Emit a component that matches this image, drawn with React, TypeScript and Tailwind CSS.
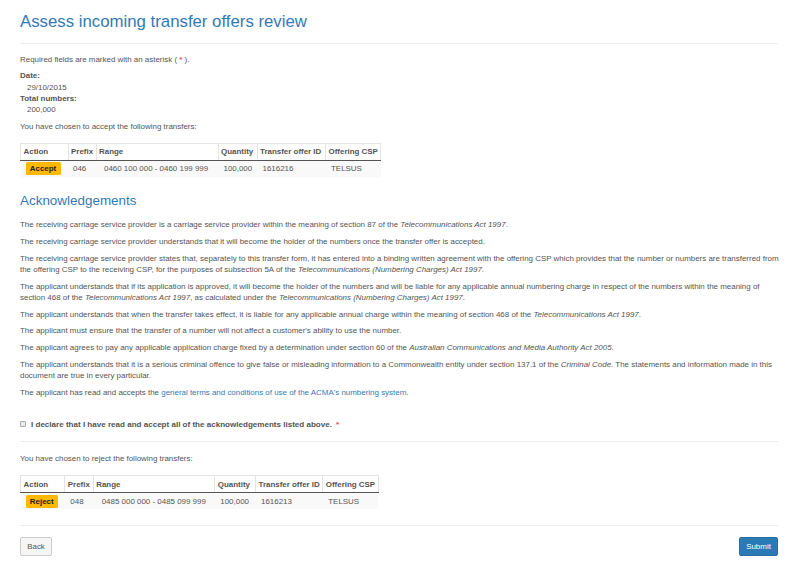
export default function App() {
  const P = "mb-[5.6px]";
  const th = "h-[17px] border border-[#e4e4e4] border-b-[#555] pl-[2.5px] text-left font-bold whitespace-nowrap";
  return (
    <div className="min-h-[567px] bg-white pl-5 pr-[22px] pt-[13px] text-[7.95px] leading-[11.2px] text-[#555555]" style={{ fontFamily: '"Liberation Sans", Arial, sans-serif' }}>
      <h1 className="text-[16.8px] leading-[18.5px] text-[#337ab7]">Assess incoming transfer offers review</h1>
      <div className="mt-[11px] mb-[10px] border-t border-[#eeeeee]" />
      <p className="mb-[5.6px]">Required fields are marked with an asterisk ( <span className="font-bold text-[#d9534f]">*</span> ).</p>
      <dl>
        <dt className="font-bold">Date:</dt>
        <dd className="pl-[7px]">29/10/2015</dd>
        <dt className="font-bold">Total numbers:</dt>
        <dd className="pl-[7px]">200,000</dd>
      </dl>
      <p className="mt-[5.6px] mb-[11px]">You have chosen to accept the following transfers:</p>
      <table className="w-[360px] table-fixed border-collapse">
        <colgroup><col className="w-[47.5px]" /><col className="w-[28px]" /><col className="w-[122px]" /><col className="w-[39px]" /><col className="w-[68.5px]" /><col className="w-[55px]" /></colgroup>
        <thead><tr>{["Action","Prefix","Range","Quantity","Transfer offer ID","Offering CSP"].map(h => <th key={h} className={th}>{h}</th>)}</tr></thead>
        <tbody><tr className="bg-[#f9f9f9]">
          <td className="py-[1.5px] pl-[5px]"><span className="block h-[13px] w-[35px] rounded-[1.5px] bg-[#ffb900] text-center leading-[13px] font-bold text-[#222]">Accept</span></td>
          <td className="pl-[5px]">046</td><td className="pl-[8px]">0460 100 000 - 0460 199 999</td><td className="pl-[5.5px]">100,000</td><td className="pl-[5.5px]">1616216</td><td className="pl-[5.5px]">TELSUS</td>
        </tr></tbody>
      </table>
      <h2 className="mt-[16px] mb-[10px] text-[13.44px] leading-[16px] text-[#337ab7]">Acknowledgements</h2>
      <p className={P}>The receiving carriage service provider is a carriage service provider within the meaning of section 87 of the <em>Telecommunications Act 1997</em>.</p>
      <p className={P}>The receiving carriage service provider understands that it will become the holder of the numbers once the transfer offer is accepted.</p>
      <p className="mr-[-4px] mb-[5.6px]">The receiving carriage service provider states that, separately to this transfer form, it has entered into a binding written agreement with the offering CSP which provides that the number or numbers are transferred from the offering CSP to the receiving CSP, for the purposes of subsection 5A of the <em>Telecommunications (Numbering Charges) Act 1997</em>.</p>
      <p className={P}>The applicant understands that if its application is approved, it will become the holder of the numbers and will be liable for any applicable annual numbering charge in respect of the numbers within the meaning of section 468 of the <em>Telecommunications Act 1997</em>, as calculated under the <em>Telecommunications (Numbering Charges) Act 1997</em>.</p>
      <p className={P}>The applicant understands that when the transfer takes effect, it is liable for any applicable annual charge within the meaning of section 468 of the <em>Telecommunications Act 1997</em>.</p>
      <p className={P}>The applicant must ensure that the transfer of a number will not affect a customer's ability to use the number.</p>
      <p className={P}>The applicant agrees to pay any applicable application charge fixed by a determination under section 60 of the <em>Australian Communications and Media Authority Act 2005</em>.</p>
      <p className={P}>The applicant understands that it is a serious criminal offence to give false or misleading information to a Commonwealth entity under section 137.1 of the <em>Criminal Code</em>. The statements and information made in this document are true in every particular.</p>
      <p className={P}>The applicant has read and accepts the <a className="text-[#337ab7]">general terms and conditions of use of the ACMA's numbering system</a>.</p>
      <label className="mt-[20.5px] flex items-center text-[8.05px] font-bold">
        <input type="checkbox" className="mr-[5px] h-[6.5px] w-[6px] appearance-none rounded-[1px] border border-[#aaaaaa] bg-[#eeeeee]" />
        I declare that I have read and accept all of the acknowledgements listed above.<span className="ml-[4px] text-[#d9534f]">*</span>
      </label>
      <div className="mt-[11.4px] mb-[10.4px] border-t border-[#eeeeee]" />
      <p className="mb-[11.4px]">You have chosen to reject the following transfers:</p>
      <table className="w-[357.7px] table-fixed border-collapse">
        <colgroup><col className="w-[44.3px]" /><col className="w-[28.4px]" /><col className="w-[121.6px]" /><col className="w-[40.7px]" /><col className="w-[67.3px]" /><col className="w-[55.4px]" /></colgroup>
        <thead><tr>{["Action","Prefix","Range","Quantity","Transfer offer ID","Offering CSP"].map(h => <th key={h} className={th}>{h}</th>)}</tr></thead>
        <tbody><tr className="bg-[#f9f9f9]">
          <td className="py-[1.5px] pl-[5px]"><span className="block h-[13px] w-[32.5px] rounded-[1.5px] bg-[#ffb900] text-center leading-[13px] font-bold text-[#222]">Reject</span></td>
          <td className="pl-[5.5px]">048</td><td className="pl-[8.5px]">0485 000 000 - 0485 099 999</td><td className="pl-[5.5px]">100,000</td><td className="pl-[5.5px]">1616213</td><td className="pl-[5.5px]">TELSUS</td>
        </tr></tbody>
      </table>
      <div className="mt-[16px] mb-[11px] border-t border-[#eeeeee]" />
      <div className="flex justify-between">
        <button className="h-[19px] w-[32px] rounded-[2px] border border-[#cccccc] bg-[#f6f6f6] text-[#555]">Back</button>
        <button className="h-[19px] w-[39px] rounded-[2px] border border-[#2e6da4] bg-[#2a7ab5] text-white">Submit</button>
      </div>
    </div>
  );
}
